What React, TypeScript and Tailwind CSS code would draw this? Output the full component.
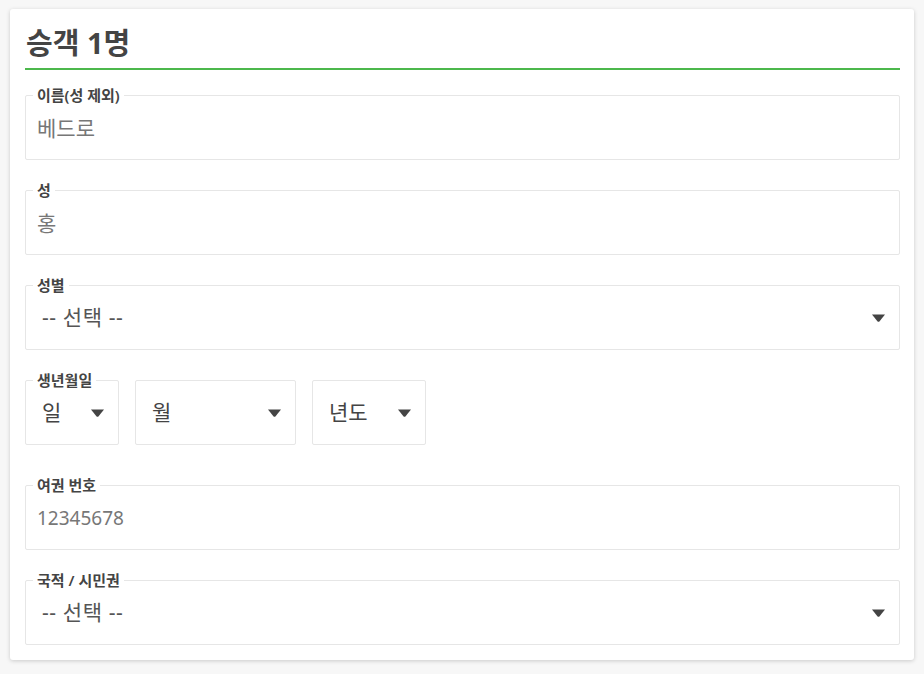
import React from "react";

const FONT = { fontFamily: '"Noto Sans", "Noto Sans CJK KR", sans-serif' };

function Caret() {
  return (
    <svg width="13" height="8" viewBox="0 0 13 8" className="shrink-0">
      <path d="M0 0.5 H13 L7.6 7.2 Q6.5 8.2 5.4 7.2 Z" fill="#444" />
    </svg>
  );
}

function FieldLabel({ children }: { children: React.ReactNode }) {
  return (
    <span className="absolute left-[7px] top-[-10px] bg-white px-[4px] text-[15px] font-semibold leading-[18px] text-[#444]">
      {children}
    </span>
  );
}

function TextField({ label, value, size = "text-[21px]" }: { label: string; value: string; size?: string }) {
  return (
    <div className="relative flex h-[65px] items-center rounded-[2px] border border-[#e6e6e6] px-[11px]">
      <FieldLabel>{label}</FieldLabel>
      <span className={`pt-[2px] text-[#777] ${size}`}>{value}</span>
    </div>
  );
}

function SelectField({ label, value }: { label: string; value: string }) {
  return (
    <div className="relative flex h-[65px] items-center justify-between rounded-[2px] border border-[#e6e6e6] pl-[16px] pr-[14px]">
      <FieldLabel>{label}</FieldLabel>
      <span className="text-[21px] tracking-[0.6px] text-[#555]">{value}</span>
      <Caret />
    </div>
  );
}

function SmallSelect({ value, width, label }: { value: string; width: string; label?: string }) {
  return (
    <div className={`relative flex h-[65px] items-center justify-between rounded-[2px] border border-[#e6e6e6] pl-[16px] pr-[14px] ${width}`}>
      {label && <FieldLabel>{label}</FieldLabel>}
      <span className="text-[21px] text-[#444]">{value}</span>
      <Caret />
    </div>
  );
}

export default function App() {
  return (
    <div className="min-h-screen bg-[#f7f7f7] pt-[9px] pl-[10px]" style={FONT}>
      <div className="w-[904px] rounded-[3px] bg-white pt-[18px] pb-[15px] pl-[15px] pr-[14px] shadow-[0_1px_4px_rgba(0,0,0,0.18)]">
        <div className="border-b-2 border-[#4cb84c] pb-[9px]">
          <h1 className="pl-[1px] text-[29px] font-bold leading-[32px] text-[#444]">승객 1명</h1>
        </div>

        <div className="mt-[25px] flex flex-col gap-[30px]">
          <TextField label="이름(성 제외)" value="베드로" />
          <TextField label="성" value="홍" />
          <SelectField label="성별" value="-- 선택 --" />
          <div className="flex gap-[16px]">
            <SmallSelect label="생년월일" value="일" width="w-[94px]" />
            <SmallSelect value="월" width="w-[161px]" />
            <SmallSelect value="년도" width="w-[114px]" />
          </div>
          <div className="mt-[10px]">
            <TextField label="여권 번호" value="12345678" size="text-[19px]" />
          </div>
          <SelectField label="국적 / 시민권" value="-- 선택 --" />
        </div>
      </div>
    </div>
  );
}
